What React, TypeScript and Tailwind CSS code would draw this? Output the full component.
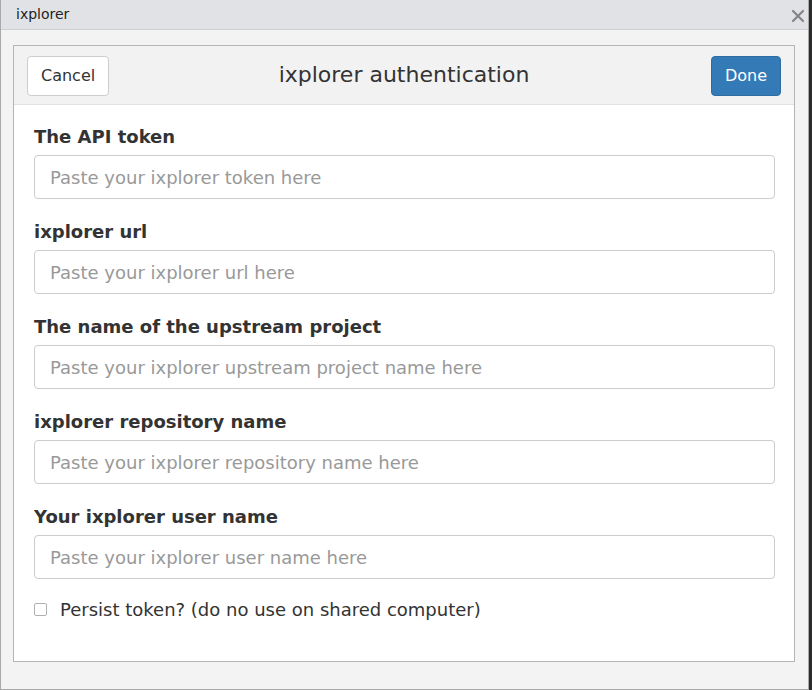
const FIELDS = [
  { label: 'The API token', placeholder: 'Paste your ixplorer token here' },
  { label: 'ixplorer url', placeholder: 'Paste your ixplorer url here' },
  { label: 'The name of the upstream project', placeholder: 'Paste your ixplorer upstream project name here' },
  { label: 'ixplorer repository name', placeholder: 'Paste your ixplorer repository name here' },
  { label: 'Your ixplorer user name', placeholder: 'Paste your ixplorer user name here' },
]

export default function App() {
  return (
    <div className="flex h-[690px] w-[812px] bg-[#2b2b2b] font-['DejaVu_Sans',sans-serif]">
      <div className="flex h-[690px] w-[809px] flex-col border-b border-l border-r border-[#a9a9a9] bg-[#f2f3f2]">
        <div className="flex h-[30px] shrink-0 items-center justify-between border-b border-[#cfd0d3] bg-[#e1e2e6] pl-[15px] pr-[3px]">
          <span className="text-[14px] text-[#222]">ixplorer</span>
          <svg width="14" height="14" viewBox="0 0 14 14" className="mt-[2px]">
            <path d="M2 2 L12 12 M12 2 L2 12" stroke="#858585" strokeWidth="2.2" strokeLinecap="round" />
          </svg>
        </div>

        <div className="px-[12px] pt-[15px]">
          <div className="flex h-[617px] w-[782px] flex-col border border-[#b4b4b4] bg-white">
            <header className="relative flex h-[59px] shrink-0 items-center justify-between border-b border-[#e2e2e2] bg-[#f2f2f2] px-[13px] pt-[1px]">
              <button className="h-[40px] rounded-[4px] border border-[#cccccc] bg-white px-[13px] text-[16px] text-[#333]">
                Cancel
              </button>
              <h1 className="absolute left-1/2 top-[14px] -translate-x-1/2 text-[22px] font-normal leading-[30px] text-[#333]">
                ixplorer authentication
              </h1>
              <button className="h-[40px] rounded-[4px] border border-[#2e6da4] bg-[#337ab7] px-[13px] text-[16px] text-white">
                Done
              </button>
            </header>

            <div className="flex flex-col px-[20px] pt-[20px]">
              {FIELDS.map((f) => (
                <div key={f.label} className="mb-[21px] flex flex-col">
                  <label className="h-[24px] text-[18px] font-bold leading-[24px] text-[#333]">{f.label}</label>
                  <input
                    className="mt-[6px] h-[44px] w-[741px] rounded-[4px] border border-[#cccccc] bg-white px-[15px] text-[18px] text-[#555] placeholder:text-[#999] outline-none"
                    placeholder={f.placeholder}
                  />
                </div>
              ))}
              <label className="-mt-[3px] flex h-[24px] items-center text-[18px] text-[#333]">
                <span className="mr-[13px] h-[13px] w-[13px] rounded-[2px] border border-[#b0b0b0] bg-white" />
                Persist token? (do no use on shared computer)
              </label>
            </div>
          </div>
        </div>
      </div>
    </div>
  )
}
